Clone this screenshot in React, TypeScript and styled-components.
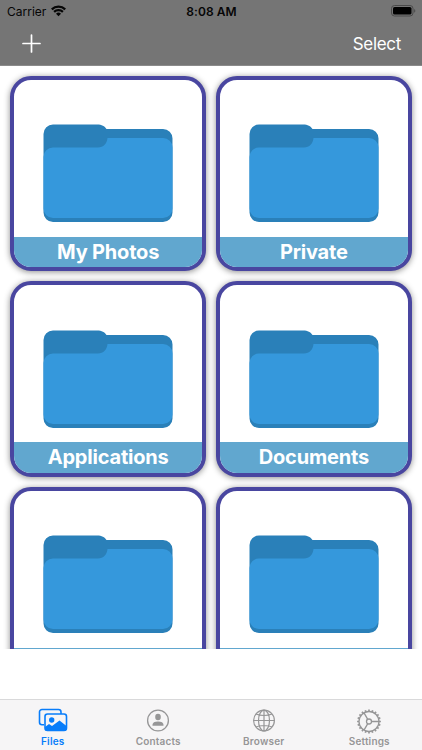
import React from "react";
import styled, { createGlobalStyle } from "styled-components";

const GlobalStyle = createGlobalStyle`
  * { box-sizing: border-box; }
  html, body { margin: 0; padding: 0; overflow: hidden; background: #fff; }
  body { font-family: Inter, "Liberation Sans", sans-serif; }
  svg { display: block; flex: none; }
`;

const Screen = styled.div`
  width: 422px;
  height: 750px;
  display: flex;
  flex-direction: column;
  background: #fff;
  overflow: hidden;
`;

const Header = styled.header`
  height: 66px;
  flex: none;
  background: #757575;
  border-bottom: 1px solid #8b8b8b;
`;

const StatusBar = styled.div`
  height: 22px;
  display: grid;
  grid-template-columns: 1fr auto 1fr;
  align-items: center;
  padding: 0 6px 0 7px;
  color: #060606;
`;

const Carrier = styled.div`
  display: flex;
  align-items: center;
  gap: 5px;
  font-size: 12px;
  letter-spacing: 0;
`;

const Clock = styled.div`
  font-size: 12px;
  font-weight: 600;
  letter-spacing: 0.05px;
`;

const Battery = styled.div`
  justify-self: end;
`;

const NavBar = styled.nav`
  height: 43px;
  display: flex;
  align-items: center;
  justify-content: space-between;
  padding: 0 21px 0 22px;
`;

const NavButton = styled.button`
  border: 0;
  padding: 0;
  background: none;
  color: #fff;
  font: 400 17px/22px Inter, sans-serif;
  letter-spacing: -0.3px;
`;

const Gallery = styled.main`
  height: 583px;
  flex: none;
  overflow: hidden;
  display: grid;
  grid-template-columns: 195.5px 195.5px;
  grid-auto-rows: 195.5px;
  gap: 10.2px;
  padding: 9.6px 10.4px 0;
`;

const Card = styled.article`
  display: flex;
  flex-direction: column;
  border: 4px solid #4946a0;
  border-radius: 21px;
  background: #fff;
  overflow: hidden;
  box-shadow: 0 1px 6px rgba(0, 0, 0, 0.45);
`;

const Thumbnail = styled.div`
  flex: 1;
  padding: 44.5px 0 0 28.8px;
`;

const CardLabel = styled.div`
  height: 30.5px;
  flex: none;
  background: #61a7cf;
  color: #fff;
  text-align: center;
  font-size: 20px;
  font-weight: 650;
  line-height: 31px;
  letter-spacing: -0.2px;
`;

const TabBar = styled.footer`
  height: 51px;
  margin-top: auto;
  display: grid;
  grid-template-columns: repeat(4, 1fr);
  background: #f6f5f6;
  border-top: 1px solid #d9d9da;
`;

const Tab = styled.div<{ $active?: boolean }>`
  display: flex;
  flex-direction: column;
  align-items: center;
  padding-top: 7px;
  color: ${(p) => (p.$active ? "#087dfa" : "#969697")};
`;

const TabLabel = styled.span`
  margin-top: 2px;
  font-size: 10px;
  line-height: 13px;
  font-weight: 600;
  letter-spacing: 0.18px;
`;

const WifiIcon = () => (
  <svg width="15" height="12" viewBox="0 0 15 12" fill="none" stroke="#060606" strokeWidth="2.3">
    <path d="M.8 4.3a9.700 9.700 0 0 1 13.400 0" />
    <path d="M3.100 6.900a6.400 6.400 0 0 1 8.800 0" />
    <path d="M7.500 11.300 5 8.800a3.600 3.600 0 0 1 5 0z" fill="#060606" stroke="none" />
  </svg>
);

const BatteryIcon = () => (
  <svg width="25" height="12" viewBox="0 0 25 12">
    <rect x=".5" y=".5" width="21.5" height="10.5" rx="3" fill="none" stroke="#4a4a4a" />
    <rect x="2" y="2" width="18.5" height="7.5" rx="1.6" fill="#000" />
    <path d="M23.2 4v3.8c1.5-.6 1.5-3.2 0-3.8z" fill="#4a4a4a" />
  </svg>
);

const PlusIcon = () => (
  <svg width="19" height="19" viewBox="0 0 19 19" stroke="#fff" strokeWidth="1.7" strokeLinecap="round">
    <path d="M9.5 1v17M1 9.5h17" />
  </svg>
);

const FolderIcon = () => (
  <svg width="130" height="99" viewBox="0 0 130 99">
    <path
      d="M10 .5h44c5 0 7.500 1.500 9.500 4.500H120a9.500 9.500 0 0 1 9.500 9.500v74a9.500 9.500 0 0 1-9.500 9.500H10a9.500 9.500 0 0 1-9.500-9.500V10A9.500 9.500 0 0 1 10 .5z"
      fill="#2a80b9"
    />
    <path
      d="M10 23.500h45c5.500 0 9-4 9.500-9.500H120a9.500 9.500 0 0 1 9.500 9.500V84.500a9.500 9.500 0 0 1-9.500 9.500H10a9.500 9.500 0 0 1-9.500-9.500V33a9.500 9.500 0 0 1 9.500-9.500z"
      fill="#3598dc"
    />
  </svg>
);

const PhotosIcon = () => (
  <svg width="30" height="26" viewBox="0 0 30 26" fill="none" stroke="currentColor" strokeWidth="1.6">
    <path d="M6 17.700H4A2.500 2.500 0 0 1 1.500 15.200V5A2.500 2.500 0 0 1 4 2.500h16.500A2.500 2.500 0 0 1 23 5v2" />
    <rect x="7" y="7" width="21.500" height="16.500" rx="2.500" />
    <circle cx="13.700" cy="13" r="2.700" fill="currentColor" stroke="none" />
    <path d="M7 20l4-3 3 2 7.500-5.500 7 5.500V22a2 2 0 0 1-2 2H9a2 2 0 0 1-2-2z" fill="currentColor" stroke="none" />
  </svg>
);

const ContactIcon = () => (
  <svg width="26" height="26" viewBox="0 0 26 26">
    <circle cx="13" cy="13.500" r="10.400" fill="none" stroke="currentColor" strokeWidth="1.300" />
    <ellipse cx="13" cy="10" rx="2.800" ry="3.300" fill="currentColor" />
    <path d="M7.500 18.800v-1c0-2.200 2-3.400 5.500-3.400s5.500 1.200 5.500 3.400v1z" fill="currentColor" />
  </svg>
);

const GlobeIcon = () => (
  <svg width="26" height="26" viewBox="0 0 26 26" fill="none" stroke="currentColor" strokeWidth="1.200">
    <circle cx="13" cy="13.500" r="10.400" />
    <ellipse cx="13" cy="13.500" rx="5.500" ry="10.400" />
    <path d="M13 3.200v20.600M2.700 13.500h20.600M5 7c4.500 2 11.500 2 16 0M5 20c4.500-2 11.500-2 16 0" />
  </svg>
);

const teeth = Array.from({ length: 20 }, (_, i) => i * 18);

const GearIcon = () => (
  <svg width="26" height="26" viewBox="0 0 26 26" fill="none" stroke="currentColor" strokeWidth="1.300" overflow="visible">
    <circle cx="13" cy="14.500" r="10" />
    <circle cx="13" cy="14.500" r="2.500" />
    <path d="M15.500 14.500h7.500M11.750 12.330l-3.750-6.500M11.750 16.670l-3.750 6.500" />
    {teeth.map((angle) => (
      <path key={angle} d="M13 2.600v1.900" strokeWidth="1.700" transform={`rotate(${angle} 13 14.5)`} />
    ))}
  </svg>
);

const folders = [
  { id: 1, name: "My Photos" },
  { id: 2, name: "Private" },
  { id: 3, name: "Applications" },
  { id: 4, name: "Documents" },
  { id: 5, name: "" },
  { id: 6, name: "" },
];

const tabs = [
  { name: "Files", Icon: PhotosIcon },
  { name: "Contacts", Icon: ContactIcon },
  { name: "Browser", Icon: GlobeIcon },
  { name: "Settings", Icon: GearIcon },
];

export default function App() {
  return (
    <Screen>
      <GlobalStyle />
      <Header>
        <StatusBar>
          <Carrier>
            Carrier
            <WifiIcon />
          </Carrier>
          <Clock>8:08 AM</Clock>
          <Battery>
            <BatteryIcon />
          </Battery>
        </StatusBar>
        <NavBar>
          <NavButton aria-label="Add">
            <PlusIcon />
          </NavButton>
          <NavButton>Select</NavButton>
        </NavBar>
      </Header>
      <Gallery>
        {folders.map(({ id, name }) => (
          <Card key={id}>
            <Thumbnail>
              <FolderIcon />
            </Thumbnail>
            <CardLabel>{name}</CardLabel>
          </Card>
        ))}
      </Gallery>
      <TabBar>
        {tabs.map(({ name, Icon }, i) => (
          <Tab key={name} $active={i === 0}>
            <Icon />
            <TabLabel>{name}</TabLabel>
          </Tab>
        ))}
      </TabBar>
    </Screen>
  );
}
